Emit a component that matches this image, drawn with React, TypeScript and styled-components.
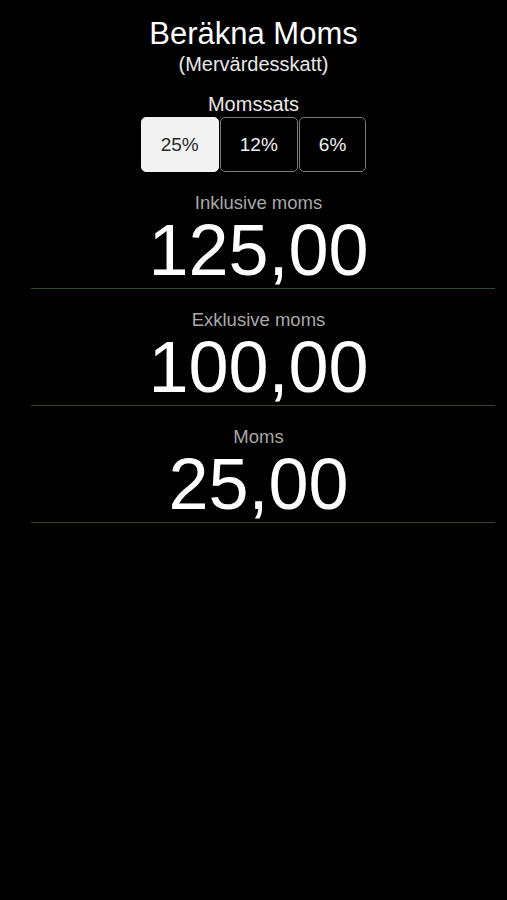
import React, { useState } from 'react'
import styled, { createGlobalStyle } from 'styled-components'

const GlobalStyle = createGlobalStyle`
  html, body {
    margin: 0;
    padding: 0;
    background: #000;
  }
  body {
    font-family: 'Liberation Sans', Arial, sans-serif;
    color: #fff;
  }
`

const rates = [25, 12, 6] as const

type Rate = (typeof rates)[number]

const formatSek = (n: number) => n.toFixed(2).replace('.', ',')

const App: React.FC = () => {
  const [rate, setRate] = useState<Rate>(25)
  const net = 100
  const vat = (net * rate) / 100

  const rows = [
    { label: 'Inklusive moms', value: net + vat },
    { label: 'Exklusive moms', value: net },
    { label: 'Moms', value: vat },
  ]

  return (
    <Page>
      <GlobalStyle />
      <Title>Beräkna Moms</Title>
      <Subtitle>(Mervärdesskatt)</Subtitle>
      <RateLabel>Momssats</RateLabel>
      <Segments>
        {rates.map((r) => (
          <Segment key={r} $active={r === rate} onClick={() => setRate(r)}>
            {r}%
          </Segment>
        ))}
      </Segments>
      {rows.map((row) => (
        <ResultRow key={row.label}>
          <ResultLabel>{row.label}</ResultLabel>
          <ResultValue>{formatSek(row.value)}</ResultValue>
        </ResultRow>
      ))}
    </Page>
  )
}

const Page = styled.div`
  width: 507px;
  min-height: 900px;
  padding-top: 16px;
  box-sizing: border-box;
  display: flex;
  flex-direction: column;
  align-items: center;
  background: #000;
`

const Title = styled.h1`
  margin: 0;
  font-size: 31px;
  line-height: 36px;
  font-weight: 400;
  color: #fff;
`

const Subtitle = styled.div`
  font-size: 20px;
  line-height: 24px;
  color: #e8e8e8;
`

const RateLabel = styled.div`
  margin-top: 17px;
  font-size: 20px;
  line-height: 22px;
  color: #e8e8e8;
`

const Segments = styled.div`
  margin-top: 2px;
  display: flex;
  gap: 1px;
`

const Segment = styled.button<{ $active: boolean }>`
  height: 55px;
  padding: 0 19px;
  border: 1px solid ${(p) => (p.$active ? '#f2f2f2' : '#7a7a7a')};
  border-radius: 5px;
  background: ${(p) => (p.$active ? '#f2f2f2' : '#000')};
  color: ${(p) => (p.$active ? '#2a2a2a' : '#f2f2f2')};
  font-family: 'Liberation Sans', Arial, sans-serif;
  font-size: 19px;
  cursor: pointer;
`

const ResultRow = styled.div`
  align-self: stretch;
  margin: 0 12px 0 31px;
  padding: 21px 9px 0 0;
  display: flex;
  flex-direction: column;
  align-items: center;
  border-bottom: 1px solid #2c4a33;
`

const ResultLabel = styled.div`
  font-size: 18.5px;
  line-height: 20px;
  color: #a9a9a9;
`

const ResultValue = styled.div`
  font-size: 72px;
  line-height: 75px;
  color: #fff;
`

export default App
